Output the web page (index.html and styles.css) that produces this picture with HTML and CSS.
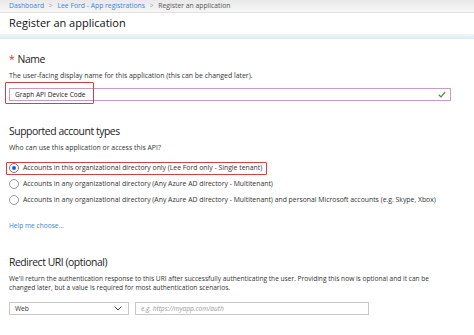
FILE: index.html
```html
<!DOCTYPE html>
<html lang="en">
<head>
    <meta charset="UTF-8">
    <title>Register an application</title>
    <link rel="stylesheet" href="styles.css">
</head>
<body>

<div class="crumbs">
    <a href="#">Dashboard</a>
    <span class="sep">&gt;</span>
    <a href="#">Lee Ford - App registrations</a>
    <span class="sep">&gt;</span>
    <span>Register an application</span>
</div>
<div class="blade-head">Register an application</div>
<div class="band"></div>

<form class="content">
    <section class="field name-field">
        <h2><span class="req">*</span> Name</h2>
        <p class="hint">The user-facing display name for this application (this can be changed later).</p>
        <div class="text-input">
            <input type="text" value="Graph API Device Code">
            <svg class="check" width="8" height="7" viewBox="0 0 8 7">
                <path d="M0.8 3.8 L3 5.9 L7.2 1" fill="none" stroke="#3c9b3c" stroke-width="1.2"/>
            </svg>
            <div class="mark name-mark"></div>
        </div>
    </section>

    <section class="field">
        <h2>Supported account types</h2>
        <p class="hint">Who can use this application or access this API?</p>
        <ul class="options">
            <li class="marked"><label><span class="radio on"></span>Accounts in this organizational directory only (Lee Ford only - Single tenant)</label></li>
            <li><label><span class="radio"></span>Accounts in any organizational directory (Any Azure AD directory - Multitenant)</label></li>
            <li><label><span class="radio"></span>Accounts in any organizational directory (Any Azure AD directory - Multitenant) and personal Microsoft accounts (e.g. Skype, Xbox)</label></li>
        </ul>
        <a class="help" href="#">Help me choose...</a>
    </section>

    <section class="field redirect">
        <h2>Redirect URI (optional)</h2>
        <p class="hint">We'll return the authentication response to this URI after successfully authenticating the user. Providing this now is optional and it can be changed later, but a value is required for most authentication scenarios.</p>
        <div class="uri-row">
            <div class="select">
                <span>Web</span>
                <svg width="8" height="5" viewBox="0 0 8 5">
                    <path d="M0.6 0.6 L4 4 L7.4 0.6" fill="none" stroke="#444" stroke-width="1"/>
                </svg>
            </div>
            <div class="uri-input">e.g. https://myapp.com/auth</div>
        </div>
    </section>
</form>

</body>
</html>
```

FILE: styles.css
```css
body {
    margin: 0;
    font-family: "Open Sans", "Noto Sans", sans-serif;
    color: #333;
    background: #fff;
    width: 474px;
    height: 335px;
    overflow: hidden;
}
a {
    color: #3a86d4;
    text-decoration: none;
}
.crumbs {
    height: 12px;
    line-height: 12px;
    padding-left: 9px;
    font-size: 6.8px;
    color: #555;
    background: linear-gradient(to bottom, #e9e9e9, #f6f6f6);
    border-bottom: 1px solid #e2e2e2;
    white-space: nowrap;
}
.crumbs .sep {
    color: #999;
    margin: 0 3px;
}
.blade-head {
    height: 21px;
    line-height: 20px;
    padding-left: 9px;
    font-size: 11px;
    color: #111;
}
.band {
    height: 5px;
    background: linear-gradient(to bottom, #f3f7fa, #dde9f0);
}
.content {
    padding: 0 9px;
}
.field h2 {
    font-weight: normal;
    font-size: 10.4px;
    letter-spacing: -0.45px;
    line-height: 14px;
    margin: 0;
    color: #222;
}
.name-field {
    padding-top: 13px;
}
.req {
    color: #d0342c;
    margin-right: 1px;
}
.hint {
    font-size: 6.9px;
    margin: 5px 0 7px;
    color: #333;
    line-height: 10px;
}
.text-input {
    position: relative;
    display: flex;
    align-items: center;
    height: 11px;
    width: 440px;
    border: 1px solid #c79ac7;
    background: #fff;
}
.text-input input {
    flex: 1;
    border: none;
    outline: none;
    padding: 0 0 0 5px;
    height: 11px;
    font-family: inherit;
    font-size: 6.6px;
    color: #222;
    background: transparent;
}
.check {
    margin-right: 4px;
}
.mark {
    position: absolute;
    border: 1.5px solid #d04242;
    border-radius: 1px;
}
.name-mark {
    left: -5px;
    top: -7px;
    width: 87px;
    height: 20px;
}
.field + .field {
    margin-top: 23px;
}
.field.redirect {
    margin-top: 24px;
}
.options {
    list-style: none;
    margin: 0;
    padding: 0;
}
.options li {
    position: relative;
    height: 16px;
    font-size: 6.85px;
    line-height: 16px;
    color: #333;
    white-space: nowrap;
}
.options label {
    display: flex;
    align-items: center;
}
.radio {
    width: 8px;
    height: 8px;
    border: 1px solid #999;
    border-radius: 50%;
    margin-right: 4px;
    position: relative;
    background: #fff;
}
.radio.on {
    border-color: #777;
}
.radio.on::after {
    content: "";
    position: absolute;
    left: 2px;
    top: 2px;
    width: 4px;
    height: 4px;
    border-radius: 50%;
    background: #1a5fc7;
}
.marked::before {
    content: "";
    position: absolute;
    left: -3px;
    top: 2px;
    width: 259px;
    height: 11px;
    border: 1.5px solid #d04242;
    border-radius: 1px;
}
.help {
    display: block;
    font-size: 6.6px;
    line-height: 10px;
    margin-top: 13px;
}
.redirect .hint {
    max-width: 440px;
    font-size: 6.6px;
    line-height: 9px;
    margin-bottom: 10px;
}
.uri-row {
    display: flex;
    gap: 6px;
}
.select {
    width: 107px;
    height: 11px;
    border: 1px solid #c8c8c8;
    padding: 0 6px 0 5px;
    display: flex;
    align-items: center;
    justify-content: space-between;
    font-size: 6.6px;
}
.uri-input {
    width: 227px;
    height: 11px;
    line-height: 11px;
    border: 1px solid #c8c8c8;
    padding-left: 5px;
    font-size: 6.6px;
    font-style: italic;
    color: #9a9a9a;
}
```
